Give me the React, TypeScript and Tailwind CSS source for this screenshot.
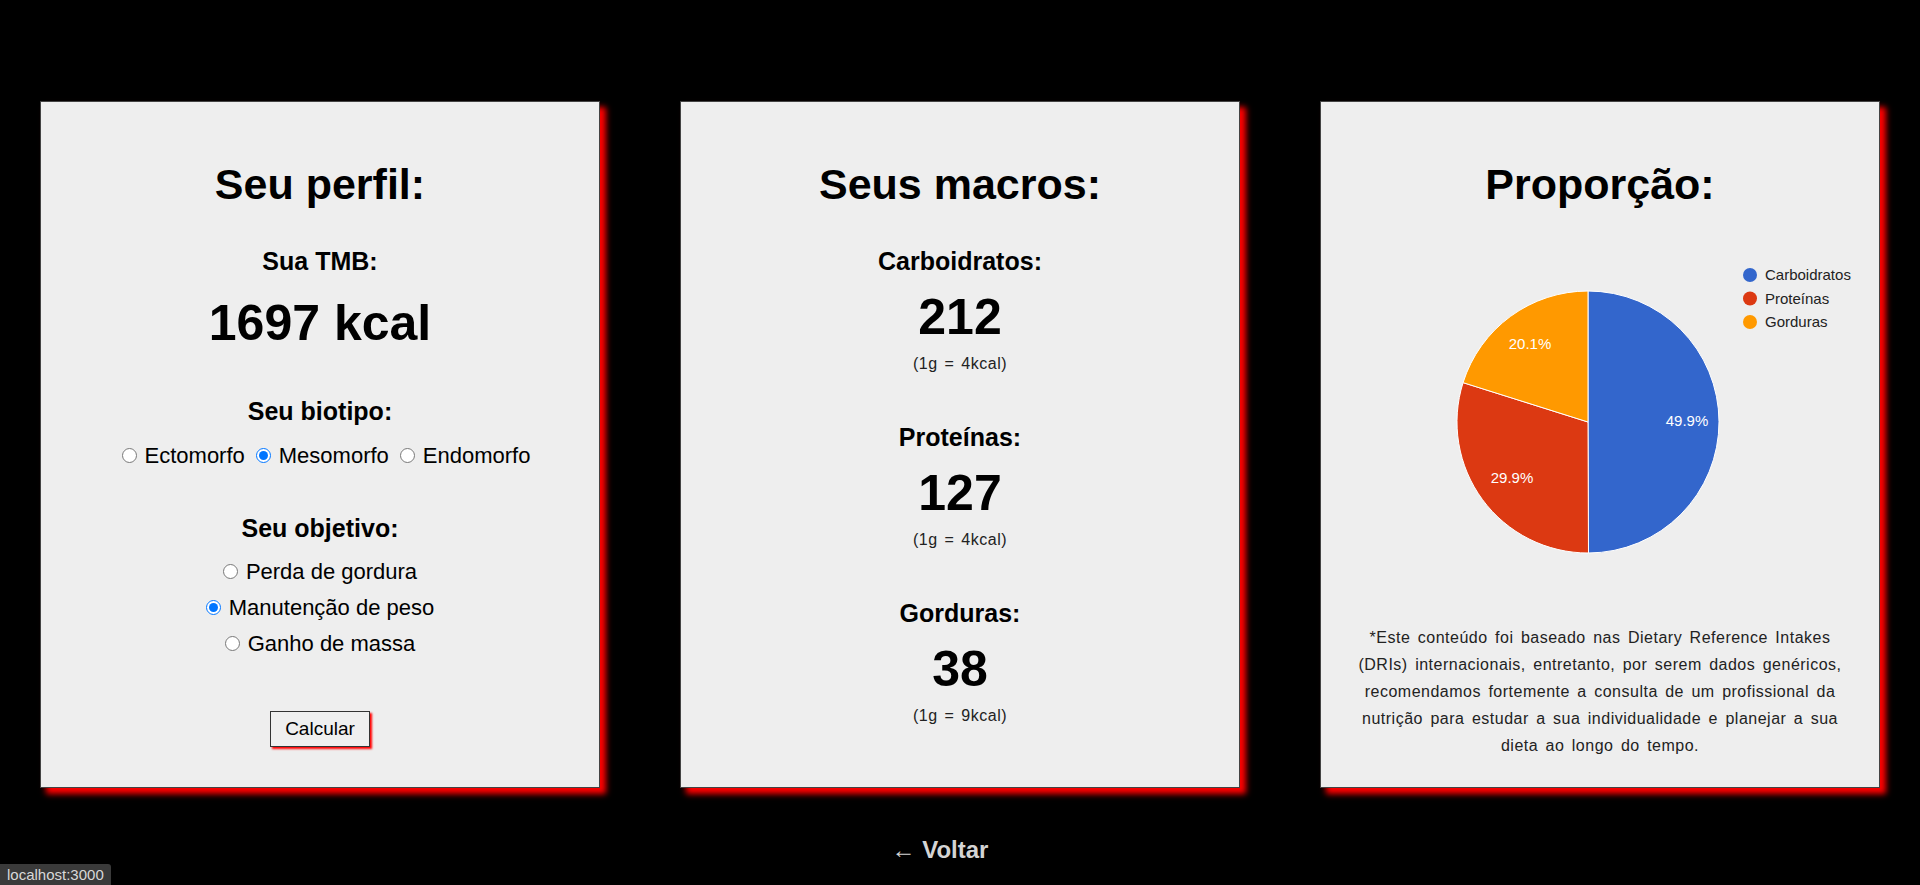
import React from "react";

const macros = [
  { nome: "Carboidratos", gramas: 212, kcal: 4, cor: "#3366cc" },
  { nome: "Proteínas", gramas: 127, kcal: 4, cor: "#dc3912" },
  { nome: "Gorduras", gramas: 38, kcal: 9, cor: "#ff9900" },
];

const labelPos = [
  { x: 366, y: 171 },
  { x: 191, y: 228 },
  { x: 209, y: 94 },
];

function Radio({ name, label, checked }: { name: string; label: string; checked?: boolean }) {
  return (
    <label className="inline-flex items-center">
      <input type="radio" name={name} defaultChecked={checked} className="w-[15px] h-[15px] m-0 mr-[8px]" />
      <span>{label}</span>
    </label>
  );
}

function Pie() {
  const cx = 267;
  const cy = 172;
  const r = 131;
  const total = macros.reduce((s, m) => s + m.gramas * m.kcal, 0);
  let acc = 0;
  const pt = (a: number) => {
    const rad = (a * Math.PI) / 180;
    return [cx + r * Math.sin(rad), cy - r * Math.cos(rad)];
  };

  return (
    <svg width="558" height="330" viewBox="0 0 558 330" className="block">
      {macros.map((m) => {
        const frac = (m.gramas * m.kcal) / total;
        const a0 = acc * 360;
        acc += frac;
        const a1 = acc * 360;
        const [x0, y0] = pt(a0);
        const [x1, y1] = pt(a1);
        const large = a1 - a0 > 180 ? 1 : 0;
        return (
          <path
            key={m.nome}
            d={`M${cx},${cy} L${x0},${y0} A${r},${r} 0 ${large} 1 ${x1},${y1} Z`}
            fill={m.cor}
            stroke="#ffffff"
            strokeWidth="1"
          />
        );
      })}
      {macros.map((m, i) => (
        <text
          key={m.nome + "l"}
          x={labelPos[i].x}
          y={labelPos[i].y + 5}
          textAnchor="middle"
          fill="#ffffff"
          fontSize="15"
          fontFamily="'Liberation Sans', Arial, sans-serif"
        >
          {(((m.gramas * m.kcal) / total) * 100).toFixed(1)}%
        </text>
      ))}
      {macros.map((m, i) => (
        <g key={m.nome + "g"}>
          <circle cx={429} cy={25 + i * 23.5} r={7} fill={m.cor} />
          <text
            x={444}
            y={25 + i * 23.5 + 5}
            fill="#222222"
            fontSize="15"
            fontFamily="'Liberation Sans', Arial, sans-serif"
          >
            {m.nome}
          </text>
        </g>
      ))}
    </svg>
  );
}

export default function App() {
  const card =
    "w-[560px] h-[687px] bg-[#eeeeee] border border-[#444] shadow-[6px_6px_6px_#ff0000] flex flex-col items-center pt-[57px] text-black";
  const titulo = "text-[43px] leading-[50px] font-bold";
  const sub = "text-[25px] leading-[28px] font-bold";
  const numero = "text-[50px] leading-[58px] font-bold";
  const pequeno = "text-[16px] leading-[18px] text-[#222] [letter-spacing:0.5px] [word-spacing:2px]";

  return (
    <div className="relative min-h-[885px] bg-black font-['Liberation_Sans',Arial,sans-serif] overflow-hidden">
      <main className="flex justify-center gap-[80px] pt-[101px]">
        <section className={card}>
          <h1 className={titulo}>Seu perfil:</h1>
          <h3 className={`${sub} mt-[38px]`}>Sua TMB:</h3>
          <p className={`${numero} mt-[19px]`}>1697 kcal</p>
          <h3 className={`${sub} mt-[45px]`}>Seu biotipo:</h3>
          <div className="mt-[18px] pl-[12px] flex items-center gap-[11px] text-[22px] leading-[25px]">
            <Radio name="biotipo" label="Ectomorfo" />
            <Radio name="biotipo" label="Mesomorfo" checked />
            <Radio name="biotipo" label="Endomorfo" />
          </div>
          <h3 className={`${sub} mt-[46px]`}>Seu objetivo:</h3>
          <div className="mt-[17px] flex flex-col items-center gap-[11px] text-[22px] leading-[25px]">
            <Radio name="objetivo" label="Perda de gordura" />
            <Radio name="objetivo" label="Manutenção de peso" checked />
            <Radio name="objetivo" label="Ganho de massa" />
          </div>
          <button className="mt-[55px] w-[100px] h-[36px] border border-[#333] bg-[#efefef] text-[19px] shadow-[2px_2px_2px_#ff0000]">
            Calcular
          </button>
        </section>

        <section className={card}>
          <h1 className={titulo}>Seus macros:</h1>
          {macros.map((m, i) => (
            <div key={m.nome} className={`flex flex-col items-center ${i === 0 ? "mt-[38px]" : "mt-[50px]"}`}>
              <h3 className={sub}>{m.nome}:</h3>
              <p className={`${numero} mt-[13px]`}>{m.gramas}</p>
              <p className={`${pequeno} mt-[9px]`}>(1g = {m.kcal}kcal)</p>
            </div>
          ))}
        </section>

        <section className={card}>
          <h1 className={titulo}>Proporção:</h1>
          <div className="mt-[41px] self-stretch">
            <Pie />
          </div>
          <p className="mt-[44px] w-[492px] text-center text-[16px] leading-[27px] text-[#222] [letter-spacing:0.5px] [word-spacing:2.5px]">
            *Este conteúdo foi baseado nas Dietary Reference Intakes (DRIs) internacionais, entretanto, por serem dados
            genéricos, recomendamos fortemente a consulta de um profissional da nutrição para estudar a sua
            individualidade e planejar a sua dieta ao longo do tempo.
          </p>
        </section>
      </main>

      <div className="flex justify-center pr-[40px] mt-[48px]">
        <a href="#" className="text-[24px] leading-[28px] font-bold text-[#d4d4d4]">
          <span className="font-normal">←</span> Voltar
        </a>
      </div>

      <div className="absolute bottom-0 left-0 h-[21px] px-[7px] bg-[#3a3a3a] text-[#d8d8d8] text-[15px] leading-[21px] rounded-tr-[3px]">
        localhost:3000
      </div>
    </div>
  );
}
